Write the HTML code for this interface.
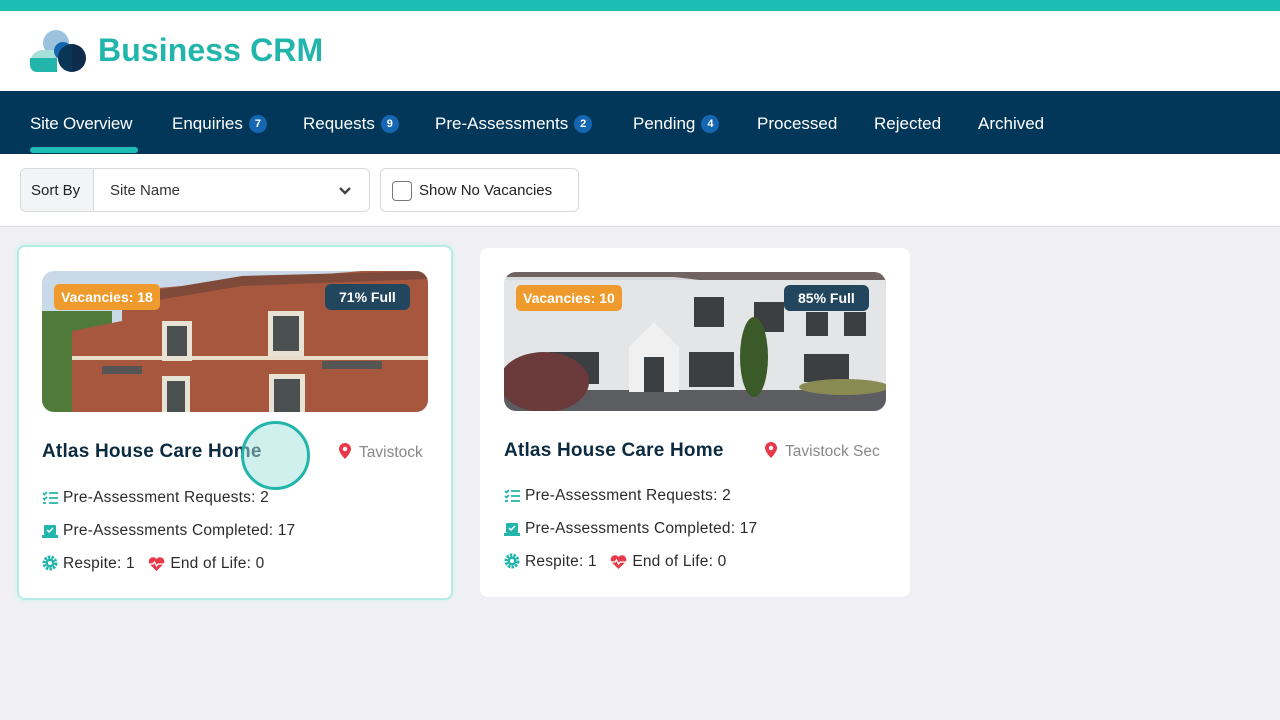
<!DOCTYPE html>
<html><head><style>
*{box-sizing:border-box;margin:0;padding:0}
body{width:1280px;height:720px;overflow:hidden;background:#f0f0f4;font-family:"Liberation Sans",sans-serif;position:relative}
.top{position:absolute;left:0;top:0;width:1280px;height:11px;background:#1ebdb4}
.hdr{position:absolute;left:0;top:11px;width:1280px;height:80px;background:#fff}
.brand{position:absolute;left:98px;top:32px;font-size:32px;font-weight:bold;color:#22b5ab;letter-spacing:0.1px}
.nav{position:absolute;left:0;top:91px;width:1280px;height:63px;background:#02375a;color:#fff;font-size:17px}
.nav span.i{position:absolute;top:23px;white-space:nowrap}
.b{display:inline-block;width:18px;height:18px;border-radius:9px;background:#1467b0;font-size:11px;font-weight:bold;text-align:center;line-height:18px;vertical-align:2px;margin-left:6px}
.ul{position:absolute;left:30px;top:147px;width:108px;height:6px;border-radius:3px;background:#1ebdb4}
.bar{position:absolute;left:0;top:154px;width:1280px;height:73px;background:#fff;border-bottom:1px solid #dcdde3}
.sel{position:absolute;left:20px;top:168px;width:350px;height:44px;border:1px solid #d8d9de;border-radius:6px;overflow:hidden;font-size:15px;color:#333}
.sel .l{position:absolute;left:0;top:0;width:73px;height:44px;background:#f3f4f6;border-right:1px solid #d8d9de;padding:13px 0 0 10px;color:#222}
.sel .v{position:absolute;left:89px;top:13px}
.chk{position:absolute;left:380px;top:168px;width:199px;height:44px;border:1px solid #d8d9de;border-radius:6px;font-size:15px;color:#222}
.chk i{position:absolute;left:11px;top:12px;width:20px;height:20px;border:1px solid #777;border-radius:4px}
.chk span{position:absolute;left:38px;top:13px}
.card{position:absolute;background:#fff;border-radius:8px}
.c1{left:17px;top:245px;width:436px;height:355px;border:2px solid #b7ebe7;box-shadow:0 0 6px #c9f0ec}
.c2{left:480px;top:248px;width:430px;height:349px}
.img{position:absolute;border-radius:12px;overflow:hidden}
.vac{position:absolute;background:#ee9a2c;color:#fff;font-size:14px;font-weight:bold;padding:5px 7px;border-radius:5px}
.full{position:absolute;background:#23465f;color:#fff;font-size:14px;font-weight:bold;padding:5px 14px;border-radius:6px}
.t{position:absolute;font-size:19px;font-weight:bold;color:#0d2b40;letter-spacing:0.2px}
.loc{position:absolute;font-size:15.5px;color:#888}
.row{position:absolute;font-size:15.5px;color:#2b2b2b;white-space:nowrap;letter-spacing:0.2px}
.row svg{vertical-align:-3px;margin-right:5px}
</style></head><body>
<div class="top"></div>
<div class="hdr"></div>
<svg style="position:absolute;left:29px;top:29px" width="58" height="44" viewBox="0 0 58 44">
<circle cx="27" cy="14" r="13" fill="#9bc2dc"/>
<path d="M1 34a13 13 0 0 1 13-13h14v22H10a9 9 0 0 1-9-9z" fill="#a9dfdb"/>
<path d="M1 29h27v14H8a7 7 0 0 1-7-7z" fill="#22b5ab"/>
<circle cx="34" cy="22" r="9" fill="#1467b0"/>
<circle cx="43" cy="29" r="14" fill="#0d2b4a"/>
<path d="M43 15a14 14 0 0 0 0 28z" fill="#0a3656"/>
</svg>
<div class="brand">Business CRM</div>
<div class="nav">
<span class="i" style="left:30px;letter-spacing:-0.2px">Site Overview</span>
<span class="i" style="left:172px">Enquiries<span class="b">7</span></span>
<span class="i" style="left:303px">Requests<span class="b">9</span></span>
<span class="i" style="left:435px">Pre-Assessments<span class="b">2</span></span>
<span class="i" style="left:633px">Pending<span class="b">4</span></span>
<span class="i" style="left:757px">Processed</span>
<span class="i" style="left:874px">Rejected</span>
<span class="i" style="left:978px">Archived</span>
</div>
<div class="ul"></div>
<div class="bar"></div>
<div class="sel"><div class="l">Sort By</div><div class="v">Site Name</div>
<svg style="position:absolute;left:317px;top:17px" width="14" height="10" viewBox="0 0 14 10"><path d="M2 2l5 5 5-5" stroke="#444" stroke-width="2.4" fill="none"/></svg></div>
<div class="chk"><i></i><span>Show No Vacancies</span></div>

<div class="card c1">
<div class="img" style="left:23px;top:24px;width:386px;height:141px">
<svg width="386" height="141" viewBox="0 0 386 141">
<rect width="386" height="141" fill="#c9d9e8"/>
<rect x="0" y="40" width="70" height="101" fill="#4f7a3a"/>
<polygon points="80,20 320,0 386,0 386,141 30,141 30,60 80,50" fill="#a8573f"/>
<polygon points="80,25 200,5 386,0 386,8 200,15 80,35" fill="#7e4a3a"/>
<rect x="30" y="85" width="356" height="4" fill="#e9dcc8"/>
<rect x="120" y="50" width="30" height="40" fill="#e8e2d5"/><rect x="125" y="55" width="20" height="30" fill="#4a4f50"/>
<rect x="226" y="40" width="36" height="45" fill="#e8e2d5"/><rect x="231" y="45" width="26" height="35" fill="#4a4f50"/>
<rect x="120" y="105" width="28" height="36" fill="#e8e2d5"/><rect x="125" y="110" width="18" height="31" fill="#4a4f50"/>
<rect x="227" y="103" width="36" height="38" fill="#e8e2d5"/><rect x="232" y="108" width="26" height="33" fill="#4a4f50"/>
<rect x="60" y="95" width="40" height="8" fill="#555"/><rect x="280" y="90" width="60" height="8" fill="#555"/>
</svg>
<div class="vac" style="left:12px;top:13px">Vacancies: 18</div>
<div class="full" style="left:283px;top:13px">71% Full</div>
</div>
<div class="t" style="left:23px;top:194px">Atlas House Care Home</div>
<div class="loc" style="left:320px;top:196px"><svg width="12" height="16" viewBox="0 0 12 16" style="vertical-align:-2px;margin-right:8px"><path d="M6 0a6 6 0 0 0-6 6c0 4 6 10 6 10s6-6 6-10a6 6 0 0 0-6-6z" fill="#e8394a"/><circle cx="6" cy="6" r="2.2" fill="#fff"/></svg>Tavistock</div>
<div class="row" style="left:23px;top:242px"><svg width="16" height="14" viewBox="0 0 16 14"><path d="M1 2l1.5 1.5L5 1M1 7l1.5 1.5L5 6M1 12h3M7 2h9M7 7h9M7 12h9" stroke="#22b5ab" stroke-width="1.7" fill="none"/></svg>Pre-Assessment Requests: 2</div>
<div class="row" style="left:23px;top:275px"><svg width="16" height="14" viewBox="0 0 16 14"><rect x="2" y="1" width="12" height="10" rx="1" fill="#22b5ab"/><rect x="0" y="11" width="16" height="3" fill="#22b5ab"/><path d="M5 6l2 2 4-4" stroke="#fff" stroke-width="1.5" fill="none"/></svg>Pre-Assessments Completed: 17</div>
<div class="row" style="left:23px;top:308px"><svg width="16" height="16" viewBox="0 0 16 16"><circle cx="8" cy="8" r="6" fill="none" stroke="#22b5ab" stroke-width="3" stroke-dasharray="2.5 1.2"/><circle cx="8" cy="8" r="4.5" fill="#22b5ab"/><circle cx="8" cy="8" r="2" fill="#fff"/></svg>Respite: 1 &nbsp;&nbsp;<svg width="17" height="14" viewBox="0 0 17 14"><path d="M8.5 14L1.5 7A4 4 0 0 1 8.5 2a4 4 0 0 1 7 5z" fill="#e8394a"/><path d="M1 7h4l1.5-2 2 4 1.5-2h6" stroke="#fff" stroke-width="1.3" fill="none"/></svg>End of Life: 0</div>
</div>

<div class="card c2">
<div class="img" style="left:24px;top:24px;width:382px;height:139px">
<svg width="382" height="139" viewBox="0 0 382 139">
<rect width="382" height="139" fill="#d6d9dc"/>
<polygon points="0,0 382,0 382,30 170,5 0,5" fill="#6f6461"/>
<rect x="0" y="8" width="382" height="110" fill="#e4e5e6"/>
<rect x="0" y="118" width="382" height="21" fill="#5b5d60"/>
<rect x="190" y="25" width="30" height="30" fill="#3c3f41"/><rect x="250" y="30" width="30" height="30" fill="#3c3f41"/>
<rect x="302" y="40" width="22" height="24" fill="#3c3f41"/><rect x="340" y="40" width="22" height="24" fill="#3c3f41"/>
<rect x="45" y="80" width="50" height="32" fill="#3c3f41"/><rect x="185" y="80" width="45" height="35" fill="#3c3f41"/>
<rect x="300" y="82" width="45" height="28" fill="#3c3f41"/>
<polygon points="125,75 150,50 175,75 175,120 125,120" fill="#f0f0f0"/><rect x="140" y="85" width="20" height="35" fill="#3c3f41"/>
<ellipse cx="40" cy="110" rx="45" ry="30" fill="#6b3a3a"/>
<ellipse cx="250" cy="85" rx="14" ry="40" fill="#3b5a2a"/>
<ellipse cx="340" cy="115" rx="45" ry="8" fill="#8a8a55"/>
</svg>
<div class="vac" style="left:12px;top:13px">Vacancies: 10</div>
<div class="full" style="left:280px;top:13px">85% Full</div>
</div>
<div class="t" style="left:24px;top:192px">Atlas House Care Home</div>
<div class="loc" style="left:285px;top:194px"><svg width="12" height="16" viewBox="0 0 12 16" style="vertical-align:-2px;margin-right:8px"><path d="M6 0a6 6 0 0 0-6 6c0 4 6 10 6 10s6-6 6-10a6 6 0 0 0-6-6z" fill="#e8394a"/><circle cx="6" cy="6" r="2.2" fill="#fff"/></svg>Tavistock Sec</div>
<div class="row" style="left:24px;top:239px"><svg width="16" height="14" viewBox="0 0 16 14"><path d="M1 2l1.5 1.5L5 1M1 7l1.5 1.5L5 6M1 12h3M7 2h9M7 7h9M7 12h9" stroke="#22b5ab" stroke-width="1.7" fill="none"/></svg>Pre-Assessment Requests: 2</div>
<div class="row" style="left:24px;top:272px"><svg width="16" height="14" viewBox="0 0 16 14"><rect x="2" y="1" width="12" height="10" rx="1" fill="#22b5ab"/><rect x="0" y="11" width="16" height="3" fill="#22b5ab"/><path d="M5 6l2 2 4-4" stroke="#fff" stroke-width="1.5" fill="none"/></svg>Pre-Assessments Completed: 17</div>
<div class="row" style="left:24px;top:305px"><svg width="16" height="16" viewBox="0 0 16 16"><circle cx="8" cy="8" r="6" fill="none" stroke="#22b5ab" stroke-width="3" stroke-dasharray="2.5 1.2"/><circle cx="8" cy="8" r="4.5" fill="#22b5ab"/><circle cx="8" cy="8" r="2" fill="#fff"/></svg>Respite: 1 &nbsp;&nbsp;<svg width="17" height="14" viewBox="0 0 17 14"><path d="M8.5 14L1.5 7A4 4 0 0 1 8.5 2a4 4 0 0 1 7 5z" fill="#e8394a"/><path d="M1 7h4l1.5-2 2 4 1.5-2h6" stroke="#fff" stroke-width="1.3" fill="none"/></svg>End of Life: 0</div>
</div>

<div style="position:absolute;left:241px;top:421px;width:69px;height:69px;border-radius:50%;border:3px solid #22b5ab;background:rgba(160,225,220,0.5)"></div>
</body></html>
